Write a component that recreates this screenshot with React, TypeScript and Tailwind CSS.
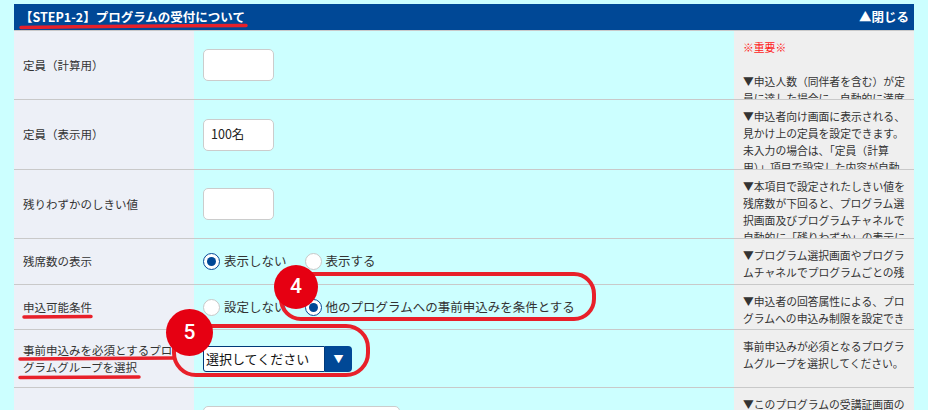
import React from 'react';

// --- Row data ---
type Row = {
  label: string[];
  height: string;
  notes: { text: string; red?: boolean }[];
  field: React.ReactNode;
};

const TextBox: React.FC<{ value?: string; wide?: boolean }> = ({ value, wide }) => (
  <div
    className={`${wide ? 'w-[197px]' : 'w-[71px]'} h-[32px] shrink-0 rounded-[5px] border border-[#cccccc] bg-white px-[7px] flex items-center text-[12.5px] text-[#222]`}
  >
    {value}
  </div>
);

const Radio: React.FC<{ checked?: boolean; label: string }> = ({ checked, label }) => (
  <label className="flex items-center gap-[4px] text-[12.5px] text-[#333]">
    <span
      className={`w-[17px] h-[17px] rounded-full bg-white flex items-center justify-center ${
        checked ? 'border-[1.5px] border-[#004896]' : 'border border-[#c8c8c8]'
      }`}
    >
      {checked && <span className="w-[9px] h-[9px] rounded-full bg-[#004896]" />}
    </span>
    {label}
  </label>
);

const SelectBox: React.FC = () => (
  <div className="flex h-[26px] w-[149px]">
    <div className="flex-1 flex items-center pl-[2px] border border-[#003a7a] rounded-l-[3px] bg-white text-[13px] text-[#111]">
      選択してください
    </div>
    <div className="w-[27px] bg-[#004896] rounded-r-[4px] flex items-center justify-center text-white text-[10px]">
      ▼
    </div>
  </div>
);

const ROWS: Row[] = [
  {
    label: ['定員（計算用）'],
    height: 'h-[69px]',
    field: <TextBox />,
    notes: [
      { text: '※重要※', red: true },
      { text: '\u00a0' },
      { text: '▼申込人数（同伴者を含む）が定' },
      { text: '員に達した場合に、自動的に満席' },
    ],
  },
  {
    label: ['定員（表示用）'],
    height: 'h-[70px]',
    field: <TextBox value="100名" />,
    notes: [
      { text: '▼申込者向け画面に表示される、' },
      { text: '見かけ上の定員を設定できます。' },
      { text: '未入力の場合は、「定員（計算' },
      { text: '用）」項目で設定した内容が自動' },
    ],
  },
  {
    label: ['残りわずかのしきい値'],
    height: 'h-[69px]',
    field: <TextBox />,
    notes: [
      { text: '▼本項目で設定されたしきい値を' },
      { text: '残席数が下回ると、プログラム選' },
      { text: '択画面及びプログラムチャネルで' },
      { text: '自動的に「残りわずか」の表示に' },
    ],
  },
  {
    label: ['残席数の表示'],
    height: 'h-[46px]',
    field: (
      <div className="flex items-center gap-[18px]">
        <Radio checked label="表示しない" />
        <Radio label="表示する" />
      </div>
    ),
    notes: [
      { text: '▼プログラム選択画面やプログラ' },
      { text: 'ムチャネルでプログラムごとの残' },
    ],
  },
  {
    label: ['申込可能条件'],
    height: 'h-[45px]',
    field: (
      <div className="flex items-center gap-[18px]">
        <Radio label="設定しない" />
        <Radio checked label="他のプログラムへの事前申込みを条件とする" />
      </div>
    ),
    notes: [
      { text: '▼申込者の回答属性による、プロ' },
      { text: 'グラムへの申込み制限を設定でき' },
    ],
  },
  {
    label: ['事前申込みを必須とするプロ', 'グラムグループを選択'],
    height: 'h-[58px]',
    field: <SelectBox />,
    notes: [
      { text: '事前申込みが必須となるプログラ' },
      { text: 'ムグループを選択してください。' },
    ],
  },
  {
    label: [''],
    height: 'h-[60px]',
    field: (
      <div className="self-start pt-[18px]">
        <TextBox wide />
      </div>
    ),
    notes: [{ text: '▼このプログラムの受講証画面の' }],
  },
];

const RED = '#e8202a';

const App: React.FC = () => {
  return (
    <div className="relative w-[928px] h-[410px] overflow-hidden bg-[#ccffff] pt-[4px] pl-[14px] font-['Noto_Sans_CJK_JP',sans-serif]">
      <div className="w-[900px]">
        {/* Section header */}
        <div className="h-[26px] bg-[#004896] flex items-center justify-between pl-[6px] pr-[5px] text-white font-bold">
          <span className="text-[12.5px]">【STEP1-2】プログラムの受付について</span>
          <span className="text-[12.5px]">▲閉じる</span>
        </div>

        {ROWS.map((row, i) => (
          <div
            key={i}
            className={`grid grid-cols-[180px_540px_180px] border-t border-[#c9c9c9] ${row.height}`}
          >
            <div className="bg-[#edf0f7] flex flex-col justify-center pl-[9px] text-[11.5px] leading-[17px] text-[#333]">
              {row.label.map((l, j) => (
                <span key={j} className="whitespace-nowrap">
                  {l}
                </span>
              ))}
            </div>
            <div className="flex items-center pl-[9px]">{row.field}</div>
            <div className="bg-[#efefef] overflow-hidden pl-[9px] pt-[8px] text-[10.8px] leading-[17px] text-[#333]">
              {row.notes.map((n, j) => (
                <div key={j} className={`whitespace-nowrap ${n.red ? 'text-[#ff1a1a]' : ''}`}>
                  {n.text}
                </div>
              ))}
            </div>
          </div>
        ))}
      </div>

      {/* Red markup strokes */}
      <svg className="absolute left-0 top-0 pointer-events-none" width="928" height="410" fill="none">
        <path d="M21 27.5 Q130 26 246 25.5" stroke={RED} strokeWidth="3.5" strokeLinecap="round" />
        <path d="M24 317 L91 316.5" stroke={RED} strokeWidth="3.5" strokeLinecap="round" />
        <path d="M20 359 L173 358" stroke={RED} strokeWidth="3.5" strokeLinecap="round" />
        <path d="M20 377.5 L139 377" stroke={RED} strokeWidth="3.5" strokeLinecap="round" />
        <rect x="281" y="274" width="313" height="45" rx="20" stroke={RED} strokeWidth="4" />
        <rect x="174" y="326" width="194" height="49" rx="22" stroke={RED} strokeWidth="4" />
      </svg>

      {/* Numbered markers */}
      <div className="absolute left-[274px] top-[265px] w-[44px] h-[44px] rounded-full bg-[#e60012] flex items-center justify-center text-white text-[21px] font-medium font-['Roboto',sans-serif]">
        4
      </div>
      <div className="absolute left-[166px] top-[309px] w-[47px] h-[47px] rounded-full bg-[#e60012] flex items-center justify-center text-white text-[21px] font-medium font-['Roboto',sans-serif]">
        5
      </div>
    </div>
  );
};

export default App;
